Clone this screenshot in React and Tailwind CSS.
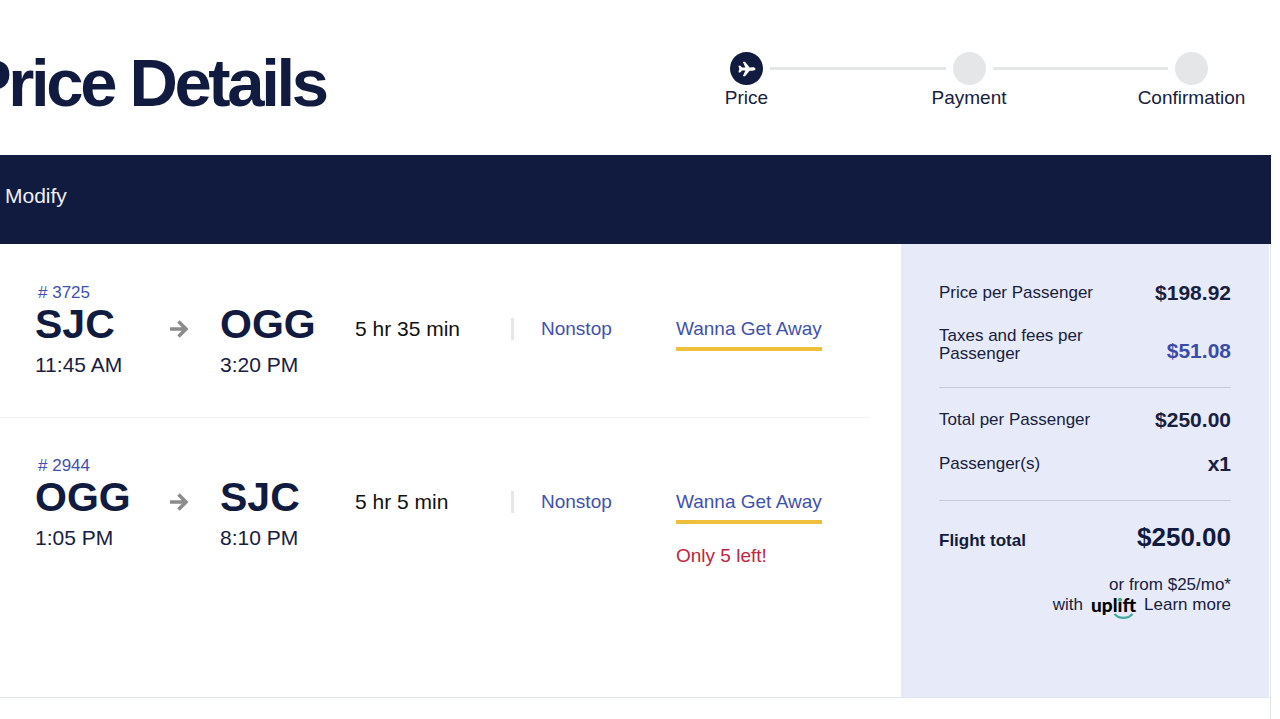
import { IoAirplane } from "react-icons/io5";

const steps = ["Price", "Payment", "Confirmation"];

const flights = [
  {
    number: "# 3725",
    from: "SJC",
    departs: "11:45 AM",
    to: "OGG",
    arrives: "3:20 PM",
    duration: "5 hr 35 min",
  },
  {
    number: "# 2944",
    from: "OGG",
    departs: "1:05 PM",
    to: "SJC",
    arrives: "8:10 PM",
    duration: "5 hr 5 min",
    note: "Only 5 left!",
  },
];

function Stepper() {
  return (
    <ol className="flex w-[478px] text-[19px] leading-[26px]">
      {steps.map((step, i) => (
        <li key={step} className={i === 0 ? "flex" : "flex flex-1"}>
          {i > 0 && <span className="mx-[7px] mt-[15px] h-[3px] flex-1 bg-[#e4e6e8]" />}
          <div className="flex w-[33px] flex-col items-center">
            <span
              className={
                i === 0
                  ? "flex size-[33px] items-center justify-center rounded-full bg-[#111b40] text-white"
                  : "size-[33px] rounded-full bg-[#e4e6e8]"
              }
            >
              {i === 0 && <IoAirplane className="size-[18px]" />}
            </span>
            <span className="whitespace-nowrap">{step}</span>
          </div>
        </li>
      ))}
    </ol>
  );
}

function Arrow() {
  return (
    <svg viewBox="0 0 19 18" className="h-[18px] w-[19px]" fill="none" stroke="#8c8c8c" strokeWidth="3.6">
      <path d="M0 9h16M8.500 1.500 16 9l-7.500 7.500" />
    </svg>
  );
}

function Airport({ number, code, time }) {
  return (
    <div className={number ? "" : "pt-6"}>
      {number && (
        <a href="#flight" className="block pl-[3px] text-[17px] leading-6 text-[#3f51ae]">
          {number}
        </a>
      )}
      <div className="text-[41px] leading-[38px] font-bold text-[#111b40]">{code}</div>
      <div className="mt-2.5 text-[21px] leading-6">{time}</div>
    </div>
  );
}

function Flight({ flight }) {
  return (
    <li className="mr-[31px] grid grid-cols-[135px_50px_135px_156px_30px_135px_1fr] items-start border-b border-[#f1f2f4] pt-9 pb-10 pl-[35px] last:border-b-0">
      <Airport number={flight.number} code={flight.from} time={flight.departs} />
      <div className="mt-9 flex h-6 items-center">
        <Arrow />
      </div>
      <Airport code={flight.to} time={flight.arrives} />
      <div className="mt-9 text-[21px] leading-6 text-[#111]">{flight.duration}</div>
      <div className="mt-[37px] h-[22px] w-[3px] bg-[#e4e6e8]" />
      <a href="#stops" className="mt-9 text-[19px] leading-6 text-[#3f51ae]">
        Nonstop
      </a>
      <div className="mt-9 flex flex-col items-start text-[19px] leading-6">
        <a href="#fare" className="border-b-4 border-[#efbf3c] pb-1.5 text-[#3f51ae]">
          Wanna Get Away
        </a>
        {flight.note && <p className="mt-5 text-[#c42440]">{flight.note}</p>}
      </div>
    </li>
  );
}

function Uplift() {
  return (
    <span className="relative font-[family-name:Lato,sans-serif] text-[19px] leading-5 font-black text-black">
      uplift
      <svg viewBox="0 0 47 26" className="absolute top-0 left-0 h-[26px] w-[47px]" fill="none">
        <circle cx="29" cy="4.800" r="1.900" fill="#43ab9e" />
        <path d="M23.500 19c4.500 5.200 13.500 5.200 18 0" stroke="#43ab9e" strokeWidth="2.200" />
      </svg>
    </span>
  );
}

function Summary() {
  return (
    <aside className="mr-px w-[368px] shrink-0 bg-[#e7ebf9] pt-[37px] pr-[38px] pb-[82px] pl-[38px] text-[17px] leading-6">
      <dl>
        <div className="flex items-center justify-between">
          <dt>Price per Passenger</dt>
          <dd className="text-[21px] leading-6 font-bold">$198.92</dd>
        </div>
        <div className="mt-[22px] flex items-end justify-between">
          <dt className="w-[170px] leading-[18px]">Taxes and fees per Passenger</dt>
          <dd className="text-[21px] leading-6 font-bold text-[#3b4ca8]">
            <a href="#taxes">$51.08</a>
          </dd>
        </div>
        <div className="mt-6 flex items-center justify-between border-t border-[#c6cad8] pt-5">
          <dt>Total per Passenger</dt>
          <dd className="text-[21px] leading-6 font-bold">$250.00</dd>
        </div>
        <div className="mt-5 flex items-center justify-between">
          <dt>Passenger(s)</dt>
          <dd className="text-[21px] leading-6 font-bold">x1</dd>
        </div>
        <div className="mt-6 flex items-end justify-between border-t border-[#c6cad8] pt-5 font-bold text-[#111b40]">
          <dt>Flight total</dt>
          <dd className="text-[26px] leading-8">$250.00</dd>
        </div>
      </dl>
      <div className="mt-[22px] text-right leading-5">
        <p>or from $25/mo*</p>
        <p className="flex justify-end gap-2">
          with
          <Uplift />
          <a href="#uplift">Learn more</a>
        </p>
      </div>
    </aside>
  );
}

export default function App() {
  return (
    <div className="flex min-h-screen flex-col overflow-hidden bg-white font-['Liberation_Sans',Arial,sans-serif] text-[#18203f]">
      <header className="flex items-start justify-between pr-[72px] pb-[37px]">
        <h1 className="-ml-[33px] pt-12 text-[67px] leading-[70px] font-bold tracking-tighter text-[#111b40]">
          Price Details
        </h1>
        <div className="pt-[52px]">
          <Stepper />
        </div>
      </header>
      <nav className="mr-[9px] bg-[#111b40] px-[5px] pt-[29px] pb-9 text-[21px] leading-6 text-[#eef0f6]">
        <a href="#modify">Modify</a>
      </nav>
      <div className="mr-[9px] flex flex-1 flex-col border-r border-[#e3e5ec]">
        <main className="flex border-b border-[#e3e5ec]">
          <ul className="flex-1 pt-px">
            {flights.map((flight) => (
              <Flight key={flight.number} flight={flight} />
            ))}
          </ul>
          <Summary />
        </main>
      </div>
    </div>
  );
}
